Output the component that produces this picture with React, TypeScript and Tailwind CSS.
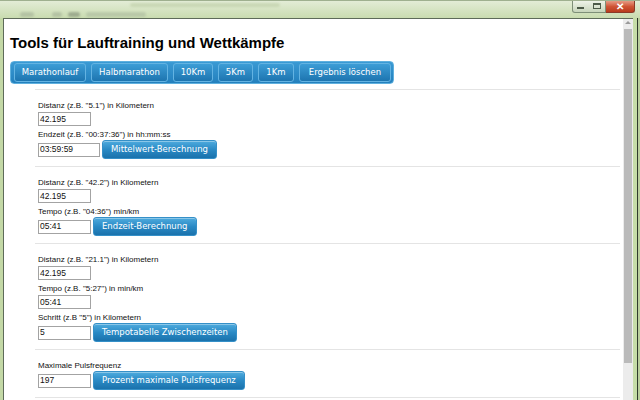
import React from "react";

const navItems = [
  { label: "Marathonlauf", w: "w-[72px]" },
  { label: "Halbmarathon", w: "w-[77px]" },
  { label: "10Km", w: "w-[40px]" },
  { label: "5Km", w: "w-[35px]" },
  { label: "1Km", w: "w-[36px]" },
  { label: "Ergebnis löschen", w: "w-[92px]" },
];

function BlueButton({ children, className = "" }: { children: React.ReactNode; className?: string }) {
  return (
    <button
      className={`h-[19px] rounded-[3px] border border-[#3590c8] bg-linear-to-b from-[#4eabde] via-[#2a8ac5] to-[#1a72ac] px-[8px] font-['DejaVu_Sans',sans-serif] text-[8.5px] leading-none text-white shadow-[inset_0_1px_0_rgba(255,255,255,0.35)] ${className}`}
    >
      {children}
    </button>
  );
}

function Label({ children }: { children: React.ReactNode }) {
  return <div className="h-[10px] whitespace-nowrap text-[8px] leading-[10px] text-[#111]">{children}</div>;
}

function Field({ value, w = "w-[53px]", className = "" }: { value: string; w?: string; className?: string }) {
  return (
    <div
      className={`flex h-[14px] items-center border border-[#a3a3a3] bg-white pl-[1px] text-[8.5px] text-[#111] ${w} ${className}`}
    >
      {value}
    </div>
  );
}

function Section({ children }: { children: React.ReactNode }) {
  return <div className="border-t border-[#e4e4e4] pl-[3px] pt-[11px] pb-[7px]">{children}</div>;
}

export default function App() {
  return (
    <div className="flex h-[400px] w-[640px] flex-col overflow-hidden bg-[#c8dcae] font-['Liberation_Sans',Arial,sans-serif]">
      {/* title bar */}
      <div className="relative h-[18px] shrink-0 border-t border-[#9fb08f] bg-linear-to-b from-[#e3ecd6] to-[#c9dcb0]">
        <div className="absolute left-[20px] top-[11px] h-[5px] w-[14px] rounded-sm bg-[#8e9a86] opacity-40 blur-[1px]" />
        <div className="absolute left-[52px] top-[11px] h-[5px] w-[10px] rounded-sm bg-[#8e9a86] opacity-40 blur-[1px]" />
        <div className="absolute left-[68px] top-[11px] h-[5px] w-[12px] rounded-sm bg-[#6f7a68] opacity-50 blur-[1px]" />
        <div className="absolute left-[86px] top-[11px] h-[5px] w-[60px] rounded-sm bg-[#9aa892] opacity-40 blur-[1px]" />
        <div className="absolute left-[130px] top-[2px] h-[4px] w-[150px] rounded-sm bg-[#b7c99e] opacity-50 blur-[1px]" />
        <div className="absolute right-[5px] top-0 flex h-[12px]">
          <div className="flex w-[34px] items-end justify-around rounded-bl-[3px] border border-t-0 border-[#7e8f78] bg-linear-to-b from-[#eef3e8] to-[#c7d5bb] pb-[3px]">
            <div className="h-[2px] w-[7px] bg-[#4c5a48]" />
            <div className="h-[6px] w-[8px] border border-t-2 border-[#4c5a48]" />
          </div>
          <div className="flex w-[29px] items-center justify-center rounded-br-[3px] border border-l-0 border-t-0 border-[#8a3a28] bg-linear-to-b from-[#e59a84] via-[#cf5435] to-[#b83a1c] text-[10px] font-bold leading-none text-white">
            ✕
          </div>
        </div>
      </div>

      {/* body */}
      <div className="flex min-h-0 flex-1">
        <div className="w-[3px] shrink-0 bg-[#c3d8a6]" />
        <div className="flex min-w-0 flex-1 border-l border-t border-[#5e6b5a]">
          <div className="min-w-0 flex-1 bg-white pl-[6px] pt-[15px]">
            <h1 className="text-[15px] font-bold leading-[18px] text-black">Tools für Lauftraining und Wettkämpfe</h1>

            <div className="mt-[9px] flex h-[23px] w-[384px] items-center gap-[5px] rounded-[4px] border border-[#5fb0de] bg-linear-to-b from-[#3a9ad4] to-[#2380bd] pl-[3px] pr-[1px]">
              {navItems.map((n) => (
                <button
                  key={n.label}
                  className={`h-[19px] ${n.w} rounded-[3px] border border-[#63b3e2] bg-linear-to-b from-[#3c9dd6] to-[#1d75b0] font-['DejaVu_Sans',sans-serif] text-[8.5px] leading-none text-white`}
                >
                  {n.label}
                </button>
              ))}
            </div>

            <div className="mt-[5px] ml-[25px] mr-[3px]">
              <Section>
                <Label>Distanz (z.B. "5.1") in Kilometern</Label>
                <Field value="42.195" className="mt-[1px] mb-[4px]" />
                <Label>Endzeit (z.B. "00:37:36") in hh:mm:ss</Label>
                <div className="flex h-[19px] items-center gap-[2px]">
                  <Field value="03:59:59" w="w-[62px]" />
                  <BlueButton>Mittelwert-Berechnung</BlueButton>
                </div>
              </Section>

              <Section>
                <Label>Distanz (z.B. "42.2") in Kilometern</Label>
                <Field value="42.195" className="mt-[1px] mb-[4px]" />
                <Label>Tempo (z.B. "04:36") min/km</Label>
                <div className="flex h-[19px] items-center gap-[2px]">
                  <Field value="05:41" />
                  <BlueButton>Endzeit-Berechnung</BlueButton>
                </div>
              </Section>

              <Section>
                <Label>Distanz (z.B. "21.1") in Kilometern</Label>
                <Field value="42.195" className="mt-[1px] mb-[4px]" />
                <Label>Tempo (z.B. "5:27") in min/km</Label>
                <Field value="05:41" className="mt-[1px] mb-[4px]" />
                <Label>Schritt (z.B "5") in Kilometern</Label>
                <div className="flex h-[19px] items-center gap-[2px]">
                  <Field value="5" />
                  <BlueButton>Tempotabelle Zwischenzeiten</BlueButton>
                </div>
              </Section>

              <Section>
                <Label>Maximale Pulsfrequenz</Label>
                <div className="flex h-[19px] items-center gap-[2px]">
                  <Field value="197" />
                  <BlueButton>Prozent maximale Pulsfrequenz</BlueButton>
                </div>
              </Section>
              <div className="border-t border-[#e4e4e4]" />
            </div>
          </div>

          {/* scrollbar */}
          <div className="flex w-[10px] shrink-0 flex-col items-center bg-[#ececec] pt-[2px]">
            <div className="h-0 w-0 border-x-[3px] border-b-[3px] border-x-transparent border-b-[#9a9a9a]" />
            <div className="mt-[5px] h-[334px] w-[8px] bg-[#bababa]" />
          </div>
        </div>
        <div className="w-[4px] shrink-0 bg-[#c6dda8]" />
        <div className="w-[1px] shrink-0 bg-[#2e3a2c]" />
        <div className="w-[2px] shrink-0 bg-[#b9cf9c]" />
      </div>
    </div>
  );
}
